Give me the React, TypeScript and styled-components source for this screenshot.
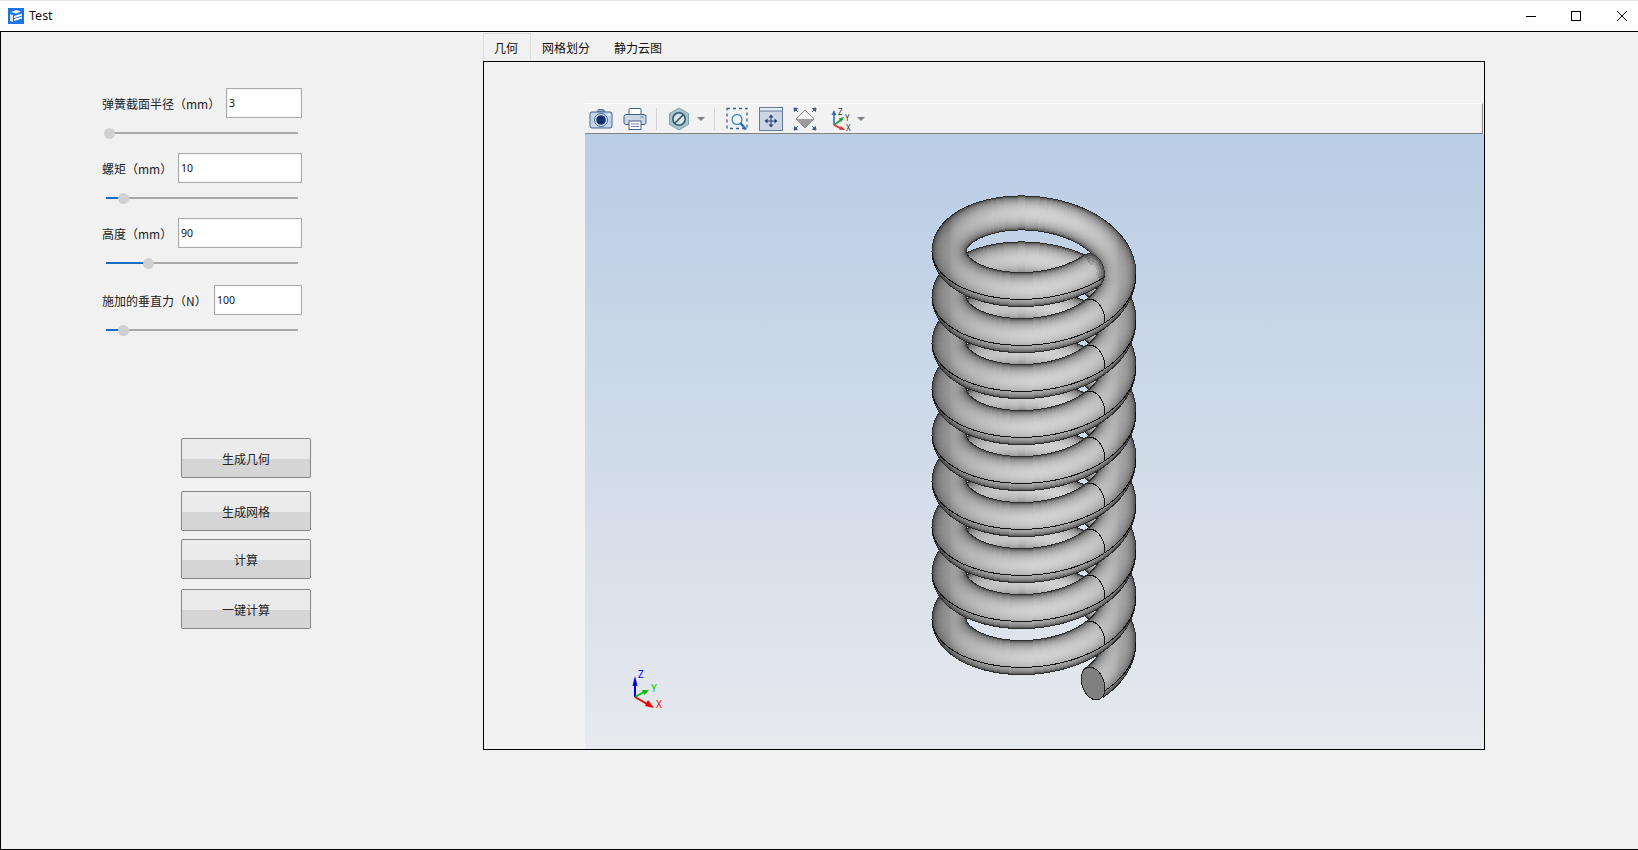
import React from "react";
import styled, { createGlobalStyle } from "styled-components";

const Global = createGlobalStyle`
  html, body { margin: 0; padding: 0; background: #f1f1f1; }
  body { font-family: "Noto Sans CJK SC", "Noto Sans", sans-serif; overflow: hidden; }
  * { box-sizing: border-box; }
`;

const Win = styled.div`
  width: 1638px;
  height: 850px;
  display: flex;
  flex-direction: column;
`;

const TitleBar = styled.header`
  height: 31px;
  flex: none;
  background: #fff;
  border-top: 1px solid #e8e8e8;
  display: flex;
  align-items: center;
  padding-left: 8px;
`;

const AppTitle = styled.span`
  margin: -1px 0 0 5px;
  font: 12.5px "Noto Sans", sans-serif;
  color: #111;
`;

const WinButtons = styled.div`
  margin-left: auto;
  display: flex;
  align-items: center;
  padding-right: 11px;
  gap: 35px;
`;

const CloseGlyph = styled.svg`
  width: 10px;
  height: 10px;
  margin-left: 1px;
`;

const Body = styled.main`
  flex: 1;
  display: flex;
  border-top: 1px solid #000;
  border-left: 1px solid #000;
  border-bottom: 1px solid #000;
  background: #f1f1f1;
`;

const Side = styled.aside`
  width: 482px;
  flex: none;
  padding: 56px 0 0 101px;
`;

const ParamGroup = styled.section<{ $mt?: number }>`
  width: 200px;
  margin-top: ${(p) => p.$mt ?? 0}px;
`;

const ParamRow = styled.div`
  height: 30px;
  display: flex;
  align-items: center;
  justify-content: space-between;
`;

const ParamLabel = styled.label`
  font-size: 12px;
  line-height: 16px;
  color: #222;
  white-space: nowrap;
  margin-top: 1px;
`;

const ParamInput = styled.input<{ $w: number }>`
  width: ${(p) => p.$w}px;
  height: 30px;
  border: 1px solid #aaa;
  outline: 1px solid #f4f4f4;
  outline-offset: -2px;
  background: #fff;
  padding: 0 0 0 2px;
  font: 10.5px "Noto Sans", sans-serif;
  color: #111;
`;

const Slider = styled.div`
  position: relative;
  width: 192px;
  height: 12px;
  margin: 9px 0 0 4px;
`;

const Track = styled.div`
  position: absolute;
  left: 0;
  right: 0;
  top: 5px;
  height: 2px;
  background: #aaa;
`;

const TrackFill = styled.div`
  position: absolute;
  left: 0;
  top: 5px;
  height: 2px;
  background: #146cbd;
`;

const Thumb = styled.div`
  position: absolute;
  top: 1px;
  width: 11px;
  height: 11px;
  margin-left: -5.5px;
  border-radius: 50%;
  background: #d0d0d0;
`;

const Actions = styled.div`
  margin: 102px 0 0 79px;
  display: flex;
  flex-direction: column;
`;

const ActionButton = styled.button<{ $mt: number }>`
  width: 130px;
  height: 40px;
  margin-top: ${(p) => p.$mt}px;
  border: 1px solid #868686;
  border-radius: 2px;
  background: linear-gradient(#ebebeb 0, #ebebeb 20px, #d5d5d5 20px, #d5d5d5 100%);
  font: 12px "Noto Sans CJK SC", sans-serif;
  color: #222;
  padding: 0;
`;

const Main = styled.div`
  flex: none;
  padding-top: 1px;
  display: flex;
  flex-direction: column;
`;

const Tabs = styled.nav`
  height: 28px;
  display: flex;
`;

const Tab = styled.div<{ $active?: boolean }>`
  height: 28px;
  padding: 0 ${(p) => (p.$active ? "12px 0 10px" : "13px 0 11px")};
  display: flex;
  align-items: center;
  font-size: 12px;
  color: #111;
  border-style: solid;
  border-color: #ddd;
  border-width: ${(p) => (p.$active ? "1px 1px 0 1px" : "0")};
`;

const Panel = styled.div`
  width: 1002px;
  height: 689px;
  border: 1px solid #000;
  background: #f2f2f2;
  padding: 41px 0 0 101px;
  display: flex;
  flex-direction: column;
`;

const Toolbar = styled.div`
  flex: none;
  height: 31px;
  margin-right: 1px;
  background: #f2f2f2;
  border-top: 1px solid #fff;
  border-bottom: 1px solid #808080;
  border-right: 1px solid #8a8a8a;
  display: flex;
  align-items: center;
  padding-left: 4px;
`;

const ToolIcon = styled.svg<{ $ml?: number }>`
  width: 24px;
  height: 24px;
  flex: none;
  margin-left: ${(p) => p.$ml ?? 0}px;
`;

const ToolSep = styled.div`
  width: 1px;
  height: 22px;
  background: #d4d4d4;
  margin-left: 9px;
`;

const DropArrow = styled.div<{ $ml: number }>`
  width: 0;
  height: 0;
  margin-left: ${(p) => p.$ml}px;
  border-left: 4px solid transparent;
  border-right: 4px solid transparent;
  border-top: 4px solid #808080;
`;

const Viewport = styled.div`
  flex: 1;
  background: linear-gradient(#b9cde5, #e7e9ed);
`;

const Scene = styled.svg`
  display: block;
  width: 100%;
  height: 100%;
`;

/* ---------- spring geometry, in page coordinates ---------- */
const CX = 1034, RX = 85, RY = 49.25, Y0 = 228.25, PITCH = 46, TUBE = 34;
const START = 46, TURNS = 9, DEG_STEP = 3, LAP = 4;
const END = START + TURNS * 360;
const rad = (d: number) => (d * Math.PI) / 180;
type Pt = [number, number];
const center = (deg: number): Pt => [
  CX + RX * Math.cos(rad(deg)),
  Y0 + (PITCH * deg) / 360 + RY * Math.sin(rad(deg)),
];
const gray = (v: number) => {
  const g = Math.round(Math.max(0, Math.min(255, v)));
  return `rgb(${g},${g},${g})`;
};
const poly = (pts: Pt[]) => "M" + pts.map((p) => `${p[0].toFixed(2)} ${p[1].toFixed(2)}`).join("L");
const angleRange = (a: number, b: number) => {
  const out: number[] = [];
  for (let d = a; d < b; d += DEG_STEP) out.push(d);
  out.push(b);
  return out;
};
const ellipsePoint = (c: Pt, t: number): Pt => {
  const x = 11 * Math.cos(rad(t));
  const y = 17 * Math.sin(rad(t));
  const a = rad(20);
  return [c[0] + x * Math.cos(a) + y * Math.sin(a), c[1] - x * Math.sin(a) + y * Math.cos(a)];
};

const WIDTHS: number[] = [];
for (let w = TUBE - 1; w > 1; w -= 2) WIDTHS.push(w);

/* Tone across the tube comes from the stroke width; tone along it is a horizontal
   gradient, since the sides of the coil are darker than its front and back. */
const centreTone = (c: number) => {
  const s = Math.sqrt(Math.max(0, 1 - c * c));
  return 166 + 44 * s - (c < 0 ? 18 * -c : 0);
};
const tone = (c: number, w: number) => {
  const u = w / TUBE;
  const v = Math.sqrt(Math.max(0, 1 - u * u));
  return 64 + (centreTone(c) - 64) * Math.pow(v, 1.05);
};
const STOPS = [-1, -0.97, -0.9, -0.75, -0.5, -0.25, 0, 0.25, 0.5, 0.75, 0.9, 0.97, 1];

const TubeGradients = () => (
  <defs>
    {WIDTHS.map((w) => (
      <linearGradient
        key={w}
        id={`tube-${w}`}
        gradientUnits="userSpaceOnUse"
        x1={CX - RX}
        x2={CX + RX}
        y1={0}
        y2={0}
      >
        {STOPS.map((c) => (
          <stop key={c} offset={(c + 1) / 2} stopColor={gray(tone(c, w))} />
        ))}
      </linearGradient>
    ))}
  </defs>
);

const TubeRun = ({ from, to }: { from: number; to: number }) => {
  const d = poly(angleRange(from, to).map(center));
  return (
    <g fill="none" strokeLinejoin="round">
      <path d={d} stroke="#2c2c2c" strokeWidth={TUBE + 1} />
      {WIDTHS.map((w) => (
        <path key={w} d={d} stroke={`url(#tube-${w})`} strokeWidth={w} />
      ))}
    </g>
  );
};

/* Back halves go first, lowest coil first; the front halves lap over their ends. */
const backs: [number, number][] = [];
const fronts: [number, number][] = [];
for (let k = TURNS; k >= 0; k--) {
  const backFrom = 180 + 360 * k;
  if (backFrom < END) backs.push([backFrom - LAP, Math.min(backFrom + 180 + LAP, END)]);
  const frontFrom = Math.max(START, 360 * k);
  const frontTo = Math.min(360 * k + 180, END);
  if (frontFrom < frontTo) fronts.push([frontFrom, frontTo]);
}

const FrontRun = ({ from, to }: { from: number; to: number }) => {
  const seam = poly(
    angleRange(from, to).map((a): Pt => {
      const p = center(a);
      return [p[0] + 17 * Math.cos(rad(a)), p[1] + 9.9 * Math.sin(rad(a))];
    })
  );
  const joint = from % 360 === 0 ? from + START : from;
  const hasJoint = joint > START && joint < END;
  const jointPts: Pt[] = [];
  if (hasJoint) for (let t = -90; t <= 40; t += 10) jointPts.push(ellipsePoint(center(joint), t));
  const startAt = center(START);
  const endAt = center(END);
  return (
    <g>
      {from === START &&
        [1, 0.93, 0.82, 0.68, 0.5, 0.3].map((k, i) => (
          <ellipse
            key={k}
            rx={11 * k}
            ry={17 * k}
            transform={`translate(${startAt[0]} ${startAt[1]}) rotate(-20)`}
            fill={gray(60 + i * 26)}
          />
        ))}
      <TubeRun from={from} to={to} />
      <path d={seam} fill="none" stroke="#111" strokeWidth={1} />
      {hasJoint && <path d={poly(jointPts)} fill="none" stroke="#111" strokeWidth={1} />}
      {to === END && (
        <ellipse
          rx={11}
          ry={17}
          transform={`translate(${endAt[0]} ${endAt[1]}) rotate(-20)`}
          fill="#808080"
          stroke="#222"
          strokeWidth={1}
        />
      )}
    </g>
  );
};

const Triad = () => (
  <g fontFamily="'Noto Sans', sans-serif" fontSize="10" shapeRendering="auto">
    <line x1={635} y1={697} x2={635} y2={684} stroke="#0000e0" strokeWidth={2} />
    <polygon points="635,676 632.5,686 637.5,686" fill="#0000e0" />
    <text x={638} y={678} fill="#0000f0">Z</text>
    <line x1={635} y1={697} x2={644} y2={692} stroke="#00c000" strokeWidth={2} />
    <polygon points="649,690 642,690 644.5,695" fill="#00c000" />
    <text x={651} y={692} fill="#00c800">Y</text>
    <line x1={635} y1={697} x2={647} y2={704} stroke="#f00000" strokeWidth={2} />
    <polygon points="654,708 645,706 648,700" fill="#f00000" />
    <text x={656} y={708} fill="#f00000">X</text>
  </g>
);

const LogoIcon = () => (
  <svg width="16" height="16" viewBox="0 0 16 16">
    <rect width="16" height="16" fill="#1b73e8" />
    <path d="M3 4l5-2 5 1.5-5 2z" fill="#fff" />
    <path d="M2 6v7l3 1V7z" fill="#d5e6fb" />
    <path d="M6 8l8-2.5v2L6 10zM6 11l8-2.5v2L6 13z" fill="#fff" />
  </svg>
);

const MinIcon = () => (
  <svg width="10" height="10" viewBox="0 0 10 10">
    <line x1="0" y1="5.5" x2="10" y2="5.5" stroke="#000" />
  </svg>
);
const MaxIcon = () => (
  <svg width="10" height="10" viewBox="0 0 10 10">
    <rect x="0.5" y="0.5" width="9" height="9" fill="none" stroke="#000" />
  </svg>
);
const CloseIcon = () => (
  <CloseGlyph viewBox="0 0 10 10">
    <path d="M0 0l10 10M10 0L0 10" stroke="#000" strokeWidth="1" />
  </CloseGlyph>
);

const params = [
  { label: "弹簧截面半径（mm）", value: "3", w: 76, at: 3, mt: 0 },
  { label: "螺矩（mm）", value: "10", w: 124, at: 17, mt: 14 },
  { label: "高度（mm）", value: "90", w: 124, at: 42, mt: 14 },
  { label: "施加的垂直力（N）", value: "100", w: 88, at: 17, mt: 16 },
];

const actions = [
  { text: "生成几何", mt: 0 },
  { text: "生成网格", mt: 13 },
  { text: "计算", mt: 8 },
  { text: "一键计算", mt: 10 },
];

export default function App() {
  return (
    <Win>
      <Global />
      <TitleBar>
        <LogoIcon />
        <AppTitle>Test</AppTitle>
        <WinButtons>
          <MinIcon />
          <MaxIcon />
          <CloseIcon />
        </WinButtons>
      </TitleBar>
      <Body>
        <Side>
          {params.map((p) => (
            <ParamGroup key={p.label} $mt={p.mt}>
              <ParamRow>
                <ParamLabel>{p.label}</ParamLabel>
                <ParamInput $w={p.w} defaultValue={p.value} />
              </ParamRow>
              <Slider>
                <Track />
                <TrackFill style={{ width: p.at }} />
                <Thumb style={{ left: p.at }} />
              </Slider>
            </ParamGroup>
          ))}
          <Actions>
            {actions.map((a) => (
              <ActionButton key={a.text} $mt={a.mt}>
                {a.text}
              </ActionButton>
            ))}
          </Actions>
        </Side>
        <Main>
          <Tabs>
            <Tab $active>几何</Tab>
            <Tab>网格划分</Tab>
            <Tab>静力云图</Tab>
          </Tabs>
          <Panel>
            <Toolbar>
              <ToolIcon viewBox="0 0 24 24">
                <path d="M8 5l1.5-2.5h5L16 5z" fill="#8fa6c4" stroke="#4f7099" />
                <rect x="1" y="5" width="22" height="16" rx="2" fill="#c3d3e9" stroke="#44658f" />
                <circle cx="12" cy="13" r="6.5" fill="#dfe8f3" stroke="#44658f" />
                <circle cx="12" cy="13" r="4.8" fill="#17306a" />
                <rect x="18.5" y="7" width="2.5" height="1.5" fill="#fff" />
              </ToolIcon>
              <ToolIcon $ml={10} viewBox="0 0 24 24">
                <rect x="6" y="1.5" width="12" height="7" rx="1" fill="#fff" stroke="#3f5f88" />
                <rect x="1" y="7.5" width="22" height="10" rx="2" fill="#ccd7e5" stroke="#3f5f88" />
                <rect x="17.5" y="9.5" width="3" height="1" fill="#5f789c" />
                <rect x="6" y="14" width="12" height="8.5" fill="#fff" stroke="#3f5f88" />
                <path d="M8 17h8M8 19.5h8" stroke="#6f87a6" />
              </ToolIcon>
              <ToolSep />
              <ToolIcon $ml={10} viewBox="0 0 24 24">
                <polygon points="12,1 21.5,6.5 21.5,17.5 12,23 2.5,17.5 2.5,6.5" fill="#a7c3c8" stroke="#7f9ea6" />
                <circle cx="12" cy="12" r="6.2" fill="#d7e4e8" stroke="#2f5a70" strokeWidth="1.6" />
                <line x1="8" y1="16" x2="16" y2="8" stroke="#2f5a70" strokeWidth="1.6" />
              </ToolIcon>
              <DropArrow $ml={6} />
              <ToolSep />
              <ToolIcon $ml={10} viewBox="0 0 24 24">
                <rect x="2" y="1.5" width="20" height="20" fill="none" stroke="#3f5f8a" strokeWidth="1.3" strokeDasharray="3 3" />
                <circle cx="12" cy="12.5" r="5" fill="#eef3f8" stroke="#4a86bd" strokeWidth="1.3" />
                <line x1="15.5" y1="16" x2="21" y2="22.5" stroke="#1f72c0" strokeWidth="2.4" />
              </ToolIcon>
              <ToolIcon $ml={10} viewBox="0 0 24 24">
                <rect x="0.5" y="0.5" width="23" height="23" fill="#cdd6e4" stroke="#64799a" />
                <rect x="0.5" y="0.5" width="23" height="3.5" fill="#e6ebf2" stroke="#64799a" />
                <path d="M12 10v8M8 14h8" stroke="#24406e" />
                <path d="M12 7.5l-2.5 3h5zM12 20.5l-2.5-3h5zM5.5 14l3-2.5v5zM18.5 14l-3-2.5v5z" fill="#24406e" />
              </ToolIcon>
              <ToolIcon $ml={10} viewBox="0 0 24 24">
                <polygon points="12,3 21,12 3,12" fill="#f8f8f8" />
                <polygon points="3,12 21,12 12,21" fill="#9c9c9c" />
                <polygon points="12,3 21,12 12,21 3,12" fill="none" stroke="#8c8c8c" />
                <path d="M1 1l3.5.6-2.9 2.9zM23 1l-3.5.6 2.9 2.9zM1 23l3.5-.6-2.9-2.9zM23 23l-3.5-.6 2.9-2.9z" fill="#3c5a84" stroke="#3c5a84" />
                <path d="M3 3l2 2M21 3l-2 2M3 21l2-2M21 21l-2-2" stroke="#3c5a84" />
              </ToolIcon>
              <ToolIcon $ml={11} viewBox="0 0 24 24">
                <line x1="6" y1="18" x2="6" y2="7" stroke="#2a6fc0" strokeWidth="1.6" />
                <polygon points="6,3 3.5,8 8.5,8" fill="#2a6fc0" />
                <line x1="6" y1="18" x2="13" y2="13" stroke="#2a9a40" strokeWidth="1.6" />
                <polygon points="16,10 10.5,11.5 13.5,15" fill="#2a9a40" />
                <line x1="6" y1="18" x2="13" y2="21.5" stroke="#e03030" strokeWidth="1.6" />
                <polygon points="17,23 11,22.8 13,19" fill="#e03030" />
                <text x="10" y="7.5" fontSize="8" fontFamily="Noto Sans, sans-serif" fill="#333">Z</text>
                <text x="17" y="13.5" fontSize="8" fontFamily="Noto Sans, sans-serif" fill="#333">Y</text>
                <text x="18" y="23.5" fontSize="8" fontFamily="Noto Sans, sans-serif" fill="#333">X</text>
              </ToolIcon>
              <DropArrow $ml={5} />
            </Toolbar>
            <Viewport>
              <Scene viewBox="585 134 899 615" preserveAspectRatio="none" shapeRendering="crispEdges">
                <TubeGradients />
                {backs.map(([a, b]) => (
                  <TubeRun key={a} from={a} to={b} />
                ))}
                {fronts.map(([a, b]) => (
                  <FrontRun key={a} from={a} to={b} />
                ))}
                <Triad />
              </Scene>
            </Viewport>
          </Panel>
        </Main>
      </Body>
    </Win>
  );
}
